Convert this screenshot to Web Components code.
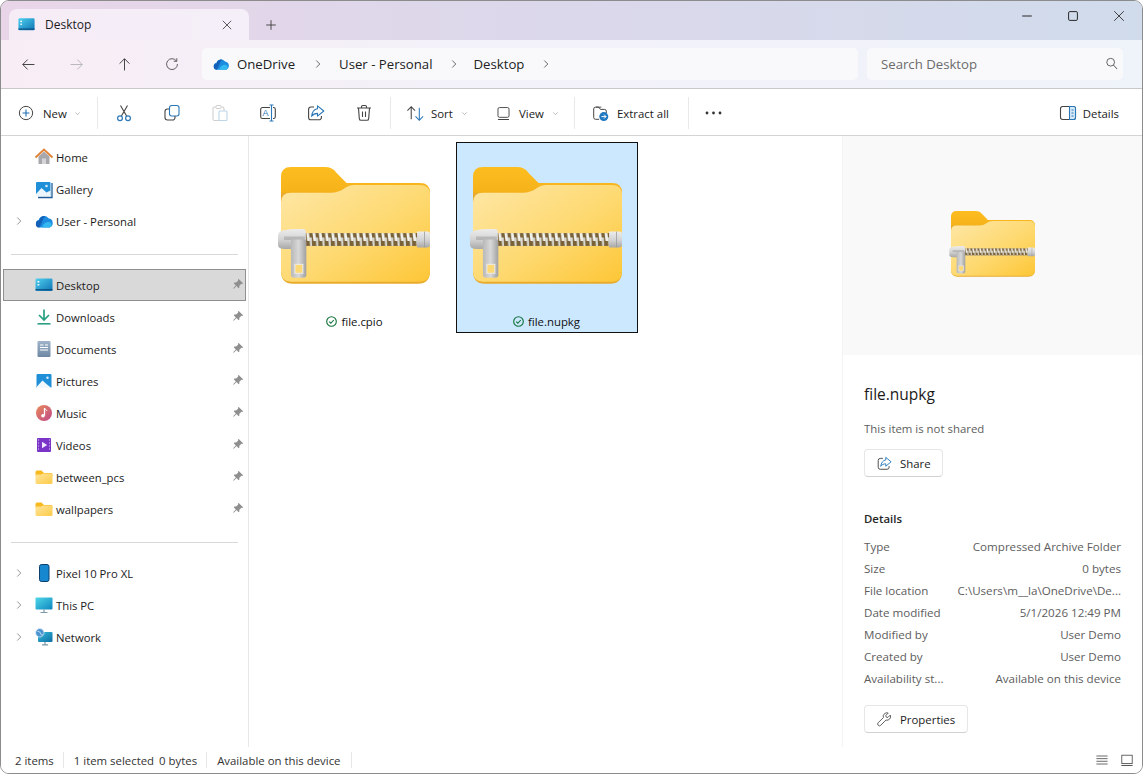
<!DOCTYPE html>
<html lang="en"><head><meta charset="utf-8"><title>Desktop - File Explorer</title>
<style>
html,body{margin:0;padding:0;background:#fff;overflow:hidden}
body{font-family:"Open Sans","Noto Sans","Liberation Sans",sans-serif;font-size:11.4px;color:#1b1b1b}
</style></head><body>
<x-window>
  <x-titlebar slot="title" label="Desktop"></x-titlebar>
  <x-addressbar slot="address"></x-addressbar>
  <x-toolbar slot="tools"></x-toolbar>
  <x-sidebar slot="side"></x-sidebar>
  <x-content slot="content">
    <x-tile name="file.cpio"></x-tile>
    <x-tile name="file.nupkg" selected></x-tile>
  </x-content>
  <x-details slot="details"></x-details>
  <x-statusbar slot="status"></x-statusbar>
</x-window>
<script>
const I={
back:'<path d="M17 10H3.5M9 4.2 3.2 10 9 15.8" fill="none" stroke="#3a3a3a" stroke-width="1.1"/>',
fwd:'<path d="M3 10h13.5M11 4.2l5.8 5.8-5.8 5.8" fill="none" stroke="#b4b4b8" stroke-width="1.1"/>',
up:'<path d="M10 17V3.5M4.2 9 10 3.2 15.8 9" fill="none" stroke="#3a3a3a" stroke-width="1.1"/>',
refresh:'<path d="M15.6 6.3A6.8 6.8 0 1 0 16.8 10M16 2.8v3.8h-3.8" fill="none" stroke="#4a4a4a" stroke-width="1.1"/>',
plus:'<circle cx="10" cy="10" r="7.4" fill="none" stroke="#444" stroke-width="1.1"/><path d="M10 6.2v7.6M6.2 10h7.6" stroke="#1f6fb2" stroke-width="1.2"/>',
cut:'<path d="M6.5 2.5 12.6 13M13.5 2.5 7.4 13" stroke="#444" stroke-width="1.1" fill="none"/><circle cx="6" cy="15.2" r="2.4" fill="none" stroke="#2a78b8" stroke-width="1.2"/><circle cx="14" cy="15.2" r="2.4" fill="none" stroke="#2a78b8" stroke-width="1.2"/>',
copy:'<rect x="7.5" y="2.5" width="9.5" height="10.5" rx="2.2" fill="#fff" stroke="#2a78b8" stroke-width="1.1"/><path d="M7 6H5.5A2.5 2.5 0 0 0 3 8.5v6A2.5 2.5 0 0 0 5.5 17h5a2.5 2.5 0 0 0 2.5-2.5V13" fill="none" stroke="#444" stroke-width="1.1"/>',
paste:'<rect x="3" y="4" width="11" height="13.5" rx="1.5" fill="none" stroke="#cfcfcf" stroke-width="1.1"/><rect x="6" y="2.5" width="5" height="3" rx="1" fill="#fff" stroke="#cfcfcf"/><rect x="9" y="8" width="8" height="9.5" rx="1" fill="#fff" stroke="#bcd6ea" stroke-width="1.1"/>',
rename:'<path d="M12 4.5H4.5A1.8 1.8 0 0 0 2.7 6.3v7.4a1.8 1.8 0 0 0 1.8 1.8H12M15 4.5h.5a1.8 1.8 0 0 1 1.8 1.8v7.4a1.8 1.8 0 0 1-1.8 1.8H15" fill="none" stroke="#444" stroke-width="1.1"/><path d="M11.5 2h4M11.5 18h4M13.5 2v16" stroke="#2a78b8" stroke-width="1.1" fill="none"/><text x="7.4" y="13.2" font-size="9" text-anchor="middle" fill="#2a78b8" font-family="Liberation Sans">A</text>',
share:'<path d="M8 4H5A2.4 2.4 0 0 0 2.6 6.4v8A2.4 2.4 0 0 0 5 16.8h8a2.4 2.4 0 0 0 2.4-2.4V13" fill="none" stroke="#444" stroke-width="1.1"/><path d="M11.5 2.8 17.8 8l-6.3 5.2V10.400C9 10.400 7 11.200 5.600 13.300 6 9.500 8 6.300 11.500 5.800Z" fill="#fff" stroke="#2a78b8" stroke-width="1.1" stroke-linejoin="round"/>',
del:'<path d="M3 5h14M7.500 5V3.800A1.300 1.300 0 0 1 8.800 2.500h2.400a1.300 1.300 0 0 1 1.300 1.300V5M4.500 5l.8 10.600a1.800 1.800 0 0 0 1.800 1.700h5.800a1.800 1.800 0 0 0 1.800-1.700L15.500 5" fill="none" stroke="#444" stroke-width="1.1"/><path d="M8.500 8.500v5.500M11.500 8.500v5.500" stroke="#444" stroke-width="1.1"/>',
sort:'<path d="M5.500 16V3M1.500 7l4-4.200 4 4.200" fill="none" stroke="#444" stroke-width="1.1"/><path d="M14 4v13M10 13l4 4.200 4-4.200" fill="none" stroke="#2a78b8" stroke-width="1.1"/>',
view:'<rect x="3.500" y="3" width="13" height="11.500" rx="1.800" fill="none" stroke="#444" stroke-width="1.1"/><path d="M3.500 17h13" stroke="#444" stroke-width="1.2"/>',
extract:'<path d="M3 5.500A2 2 0 0 1 5 3.500h3.500l2 2.500H15a2 2 0 0 1 2 2v2M3 5.500V15a2 2 0 0 0 2 2h4" fill="none" stroke="#444" stroke-width="1.1"/><path d="M5.500 3.500h6" stroke="#444" stroke-width="1"/><circle cx="14.200" cy="14" r="5" fill="#1f77c0"/><path d="M11.600 14h5M14.500 11.800l2.200 2.200-2.200 2.200" stroke="#fff" stroke-width="1.100" fill="none"/>',
details:'<rect x="2.500" y="3.500" width="15" height="13" rx="2.200" fill="none" stroke="#444" stroke-width="1.1"/><path d="M11.500 3.500h4a2 2 0 0 1 2 2v9a2 2 0 0 1-2 2h-4Z" fill="#d6e9f7" stroke="#2a78b8" stroke-width="1.1"/><path d="M13.500 7h2M13.500 10h2M13.500 13h2" stroke="#2a78b8"/>',
wrench:'<path d="M16.800 4.800 14 7.600l-2-.400-.4-2 2.800-2.800a4.300 4.300 0 0 0-5.700 5.300L2.600 13.800a2.100 2.100 0 0 0 3 3l6.100-6.100a4.300 4.300 0 0 0 5.100-5.900Z" fill="none" stroke="#444" stroke-width="1" stroke-linejoin="round"/>',
search:'<circle cx="8.500" cy="8" r="4.300" fill="none" stroke="#555" stroke-width="1"/><path d="m11.700 11.200 4 4.400" stroke="#555" stroke-width="1.1"/>',
chev:'<path d="m7.500 5 5 5-5 5" fill="none" stroke="#3c3c3c" stroke-width="1.1"/>',
chevg:'<path d="m7.500 5 5 5-5 5" fill="none" stroke="#8a8a8a" stroke-width="1.3"/>',
down:'<path d="m6 8 4 4 4-4" fill="none" stroke="#9a9a9a" stroke-width="1.2"/>',
pin:'<path d="M11 2.800 17.200 9l-1 .9-1.300-.3-3 3 .1 2.400-1.100 1-3-3L4 16.900l-.9-.9L6.900 12l-3-3 1-1.100 2.400.1 3-3-.3-1.300Z" fill="#8f8f8f"/>',
home:'<path d="M4.500 9.500 10 4.500l5.500 5V17h-11Z" fill="#a8a8ac"/><rect x="8" y="11.500" width="4" height="5.500" fill="#d5d5d8"/><path d="M1.500 10.500 10 2.500l8.500 8" fill="none" stroke="#e0853a" stroke-width="2"/>',
gallery:'<rect x="2" y="3" width="14.500" height="14" rx="1" fill="#1f8fd8"/><path d="M2 15l5.500-6 5 4.500 4-2V17H2Z" fill="#eaf5fc"/><circle cx="12.500" cy="7" r="1.300" fill="#cfe8f8"/><path d="M18 4v14.500H4" fill="none" stroke="#1c5d96" stroke-width="1.300"/>',
cloud:'<path d="M6 16.500a4 4 0 0 1-1.200-7.800A5.500 5.500 0 0 1 14.500 7.200 4.800 4.800 0 0 1 15.500 16.500Z" fill="#1d8be0"/><path d="M5.500 16.500a3.500 3.500 0 0 1-.3-7 5 5 0 0 1 6.300-4.200C9 7 9 9 8 11Z" fill="#1260b8"/><path d="M8 16.500c1-3 3-6 7.500-5.500A3 3 0 0 1 16 16.500Z" fill="#35b8f0"/>',
desktop:'<rect x="1.500" y="3.500" width="17" height="12.500" rx="1.300" fill="url(#dk)"/><defs><linearGradient id="dk" x1="0" y1="0" x2="1" y2="1"><stop offset="0" stop-color="#4fd0ef"/><stop offset="1" stop-color="#0f74b4"/></linearGradient></defs><rect x="3.500" y="6" width="1.800" height="1.500" fill="#fff"/><rect x="3.500" y="9" width="1.800" height="1.500" fill="#e6f6fc"/><path d="M1.500 14.800h17" stroke="#0b4f84" stroke-width="1.300"/>',
downloads:'<path d="M10 2.500v10M5 8l5 5 5-5" fill="none" stroke="#2aa082" stroke-width="1.700"/><path d="M3.500 16.800h13" stroke="#2aa082" stroke-width="1.600"/>',
docs:'<rect x="3.500" y="2" width="13" height="16" rx="1" fill="url(#dc)"/><defs><linearGradient id="dc" x1="0" y1="0" x2="0" y2="1"><stop offset="0" stop-color="#9fb4ca"/><stop offset="1" stop-color="#6e87a4"/></linearGradient></defs><path d="M6 6h3.500M11 6h3M6 8.500h8M6 11h8" stroke="#fff" stroke-width="1.100"/>',
pics:'<rect x="2.500" y="3" width="15" height="14" rx="1" fill="#1f8fd8"/><path d="M2.500 16l6-6.500 4.500 4 4.500 3.500H3Z" fill="#f0f8fd"/><circle cx="13.500" cy="6.800" r="1.200" fill="#d8eefa"/>',
music:'<circle cx="10" cy="10" r="8" fill="url(#mu)"/><defs><linearGradient id="mu" x1="0" y1="0" x2="1" y2="1"><stop offset="0" stop-color="#e88a58"/><stop offset="1" stop-color="#c0488a"/></linearGradient></defs><path d="M10.500 5v7.500" stroke="#fff" stroke-width="1.300"/><circle cx="9" cy="12.800" r="1.800" fill="#fff"/><path d="M10.500 5c.5 1.500 2 1.800 2.500 3" stroke="#fff" fill="none"/>',
videos:'<rect x="3" y="3" width="14" height="14" rx="1" fill="#7a34c8"/><path d="M8 6.800v6.400l5.200-3.200Z" fill="#f0e8ff"/><path d="M4 5h1M4 8h1M4 11h1M4 14h1M15 5h1M15 8h1M15 11h1M15 14h1" stroke="#e0ccf8" stroke-width="1.200"/>',
folder:'<path d="M1.500 5A1.500 1.500 0 0 1 3 3.500h4.500L10 6h7a1.500 1.500 0 0 1 1.500 1.500V9h-17Z" fill="#f7b91e"/><path d="M1.500 7.500H7L9 6.500h8A1.500 1.500 0 0 1 18.500 8v7.500A1.500 1.500 0 0 1 17 17H3a1.500 1.500 0 0 1-1.500-1.500Z" fill="url(#fo)"/><defs><linearGradient id="fo" x1="0" y1="0" x2="1" y2="1"><stop offset="0" stop-color="#fee49a"/><stop offset="1" stop-color="#fdcb4a"/></linearGradient></defs>',
phone:'<rect x="5.500" y="1.500" width="9.500" height="17" rx="2" fill="#1787d0" stroke="#0c3f6e" stroke-width="1"/>',
pc:'<rect x="1.500" y="2.500" width="17" height="12" rx="1" fill="url(#pc)"/><defs><linearGradient id="pc" x1="0" y1="0" x2="1" y2="1"><stop offset="0" stop-color="#4fd8e8"/><stop offset="1" stop-color="#0f86c0"/></linearGradient></defs><path d="M10 14.500v2.800M6.500 17.500h7" stroke="#7d98a8" stroke-width="1.200"/>',
net:'<rect x="4" y="5" width="14.500" height="10" rx="1" fill="url(#nt)"/><defs><linearGradient id="nt" x1="0" y1="0" x2="1" y2="1"><stop offset="0" stop-color="#36bcd8"/><stop offset="1" stop-color="#0e6ea6"/></linearGradient></defs><path d="M11 15v2.500M8 17.800h6" stroke="#7d98a8" stroke-width="1.200"/><circle cx="5.800" cy="5.800" r="4.200" fill="#4c94d0" stroke="#e8f2fa" stroke-width=".7"/><path d="M3.500 4.500c1.500-.5 2.500.5 3 2s1 1.500 2 1" stroke="#d6ecf8" fill="none"/>',
check:'<circle cx="10" cy="10" r="7.400" fill="none" stroke="#0f7038" stroke-width="1.700"/><path d="m6.500 10.200 2.500 2.500 4.500-5" fill="none" stroke="#0f7038" stroke-width="1.700"/>',
list:'<path d="M3 5h14M3 8.300h14M3 11.600h14M3 15h14" stroke="#444" stroke-width="1"/>',
tile:'<rect x="3.500" y="4" width="13" height="10.500" fill="none" stroke="#444" stroke-width="1"/><path d="M3 16.800h14" stroke="#444" stroke-width="1.200"/>',
x:'<path d="m4 4 12 12M16 4 4 16" stroke="#2e2e2e" stroke-width="1.100" fill="none"/>',
newtab:'<path d="M10 4v12M4 10h12" stroke="#3a3a3a" stroke-width="1.100"/>',
min:'<path d="M4 10h12" stroke="#1f1f1f" stroke-width="1.200"/>',
max:'<rect x="4.500" y="4.500" width="11" height="11" rx="1.500" fill="none" stroke="#1f1f1f" stroke-width="1.200"/>'
};
function def(tag,html,cls){
  const t=document.createElement('template');t.innerHTML=html;
  customElements.define(tag,class extends HTMLElement{
    constructor(){super();this.attachShadow({mode:'open'}).appendChild(t.content.cloneNode(true));}
    connectedCallback(){cls&&cls.call(this,this.shadowRoot);}
  });
}
def('x-icon',`<style>:host{display:inline-flex;flex:none;width:var(--s,20px);height:var(--s,20px)}svg{width:100%;height:100%;display:block}</style><svg viewBox="0 0 20 20"></svg>`,
 function(r){r.querySelector('svg').innerHTML=I[this.getAttribute('n')]||'';const s=this.getAttribute('s');if(s)this.style.setProperty('--s',s+'px');});

def('x-window',`<style>
:host{display:grid;box-sizing:border-box;width:1143px;height:774px;border:1px solid #8c8c8c;border-radius:9px;overflow:hidden;background:#fff;
grid-template-columns:248px 594px 1fr;grid-template-rows:39px 49px 47px 1fr 26px}
::slotted([slot=title]),::slotted([slot=address]),::slotted([slot=tools]),::slotted([slot=status]){grid-column:1/4}
</style><slot name="title"></slot><slot name="address"></slot><slot name="tools"></slot><slot name="side"></slot><slot name="content"></slot><slot name="details"></slot><slot name="status"></slot>`);

def('x-titlebar',`<style>
:host{display:flex;align-items:flex-end;padding-left:8px;background:linear-gradient(90deg,#e9d5e8 0,#ded7ea 35%,#d0dbeb 100%);font-size:12px}
.tab{width:240px;height:31px;box-sizing:border-box;display:flex;align-items:center;background:linear-gradient(90deg,#f6ecf6,#f4eff8);border-radius:8px 8px 0 0;padding:0 15px 0 8px}
.tab span{margin-left:9px;flex:1;color:#1c1c1c}
.plus{margin-left:14px;align-self:center;margin-top:9px}
.sp{flex:1}.c{display:flex;align-self:flex-start;margin-top:5px}
.c div{width:46px;height:20px;display:flex;justify-content:center;align-items:center}
</style><div class="tab"><x-icon n="desktop" s="19"></x-icon><span>Desktop</span><x-icon n="x" s="14"></x-icon></div>
<x-icon class="plus" n="newtab" s="16"></x-icon><div class="sp"></div>
<div class="c"><div><x-icon n="min" s="16"></x-icon></div><div><x-icon n="max" s="16"></x-icon></div><div><x-icon n="x" s="16"></x-icon></div></div>`);

def('x-addressbar',`<style>
:host{display:flex;align-items:center;box-sizing:border-box;padding:0 0 0 3px;background:linear-gradient(90deg,#f8edf5,#f3f1f9 40%,#eff3fa);border-bottom:1px solid #c9c9cb}
.n{width:48px;display:flex;justify-content:center}
.crumb{margin-left:6px;width:656px;height:32px;border-radius:5px;background:#f9f9fc;display:flex;align-items:center;padding-left:10px;box-sizing:border-box;font-size:13.2px;color:#222}
.crumb x-icon{margin-right:7px}
.search{margin-left:9px;width:256px;height:32px;border-radius:5px;background:#f9f9fc;display:flex;align-items:center;justify-content:space-between;padding:0 2px 0 14px;box-sizing:border-box;font-size:13.2px;color:#6b6b6b}
</style><div class="n"><x-icon n="back" s="17"></x-icon></div><div class="n"><x-icon n="fwd" s="17"></x-icon></div><div class="n"><x-icon n="up" s="17"></x-icon></div><div class="n"><x-icon n="refresh" s="16"></x-icon></div>
<div class="crumb"><x-icon n="cloud" s="18"></x-icon><span>OneDrive</span><x-icon style="margin:0 14px 0 16px" n="chev" s="14"></x-icon><span>User - Personal</span><x-icon style="margin:0 13px 0 14px" n="chev" s="14"></x-icon><span>Desktop</span><x-icon style="margin:0 0 0 15px" n="chev" s="14"></x-icon></div>
<div class="search"><span>Search Desktop</span><x-icon n="search" s="18"></x-icon></div>`);

def('x-toolbar',`<style>
:host{display:flex;align-items:center;box-sizing:border-box;border-bottom:1px solid #d4d4d4;background:#fff;height:47px;font-size:11.4px;padding:2px 0 0 16px}
.sep{width:1px;height:32px;background:#e9e9e9;flex:none}
.ic{width:48px;display:flex;justify-content:center;flex:none}
.t{display:flex;align-items:center;flex:none}
.sp{flex:1}
.lbl{margin-left:8px}
</style>
<div class="t" style="width:80px"><x-icon n="plus" s="18"></x-icon><span class="lbl">New</span><x-icon n="down" s="11" style="margin-left:5px"></x-icon></div>
<div class="sep"></div>
<div class="t" style="margin-left:2px"><div class="ic"><x-icon n="cut"></x-icon></div><div class="ic"><x-icon n="copy"></x-icon></div><div class="ic"><x-icon n="paste"></x-icon></div><div class="ic"><x-icon n="rename"></x-icon></div><div class="ic"><x-icon n="share"></x-icon></div><div class="ic"><x-icon n="del"></x-icon></div></div>
<div class="sep" style="margin-left:2px"></div>
<div class="t" style="margin-left:15px;width:89px"><x-icon n="sort" s="19"></x-icon><span class="lbl" style="margin-left:6px">Sort</span><x-icon n="down" s="11" style="margin-left:6px"></x-icon></div>
<div class="t" style="width:79px"><x-icon n="view" s="17"></x-icon><span class="lbl" style="margin-left:7px">View</span><x-icon n="down" s="11" style="margin-left:6px"></x-icon></div>
<div class="sep"></div>
<div class="t" style="margin-left:16px;width:97px"><x-icon n="extract" s="18"></x-icon><span class="lbl">Extract all</span></div>
<div class="sep"></div>
<div class="t" style="margin-left:16px"><svg width="17" height="4" viewBox="0 0 17 4"><circle cx="2" cy="2" r="1.400" fill="#333"/><circle cx="8.500" cy="2" r="1.400" fill="#333"/><circle cx="15" cy="2" r="1.400" fill="#333"/></svg></div>
<div class="sp"></div>
<div class="t" style="margin-right:23px"><x-icon n="details" s="20"></x-icon><span class="lbl" style="margin-left:5px">Details</span></div>`);

def('x-nav',`<style>
:host{display:flex;align-items:center;height:32px;box-sizing:border-box;margin-left:2px;width:243px;font-size:11.3px}
:host([active]){background:#d9d9d9;border:1px solid #8f8f8f}
.e{width:31px;display:flex;justify-content:center;flex:none}
.i{width:20px;margin-right:2px;display:flex;flex:none}
.t{flex:1;color:#1b1b1b}
.p{margin-right:1px}
</style><div class="e"></div><div class="i"></div><div class="t"><slot></slot></div><div class="p"></div>`,function(r){
 if(this.hasAttribute('exp'))r.querySelector('.e').innerHTML='<x-icon n="chevg" s="14"></x-icon>';
 r.querySelector('.i').innerHTML=`<x-icon n="${this.getAttribute('i')}" s="20"></x-icon>`;
 if(this.hasAttribute('pin'))r.querySelector('.p').innerHTML='<x-icon n="pin" s="14"></x-icon>';
 if(this.hasAttribute('active')){r.querySelector('.e').style.marginLeft='-1px';r.querySelector('.p').style.marginRight='0';}
});

def('x-sidebar',`<style>
:host{display:flex;flex-direction:column;border-right:1px solid #e8e8e8;padding-top:5px;box-sizing:border-box;min-height:0}
hr{border:0;height:1px;background:#d8d8d8;margin:17px 10px 14px 10px;width:227px;flex:none}
</style>
<x-nav i="home">Home</x-nav><x-nav i="gallery">Gallery</x-nav><x-nav i="cloud" exp>User - Personal</x-nav><hr>
<x-nav i="desktop" pin active>Desktop</x-nav><x-nav i="downloads" pin>Downloads</x-nav><x-nav i="docs" pin>Documents</x-nav><x-nav i="pics" pin>Pictures</x-nav><x-nav i="music" pin>Music</x-nav><x-nav i="videos" pin>Videos</x-nav><x-nav i="folder" pin>between_pcs</x-nav><x-nav i="folder" pin>wallpapers</x-nav><hr>
<x-nav i="phone" exp>Pixel 10 Pro XL</x-nav><x-nav i="pc" exp>This PC</x-nav><x-nav i="net" exp>Network</x-nav>`);

def('x-content',`<style>
:host{display:flex;align-items:flex-start;gap:10px;padding:6px 0 0 15px;box-sizing:border-box;border-right:1px solid #f3f3f3}
</style><slot></slot>`);

def('x-zip',`<style>:host{display:block;width:var(--w,149px)}svg{display:block;width:100%;height:auto;overflow:visible}</style>
<svg viewBox="0 0 150 118">
<defs>
<linearGradient id="b" x1="0" y1="0" x2="0" y2="1"><stop offset="0" stop-color="#fdbd1f"/><stop offset="1" stop-color="#eba513"/></linearGradient>
<linearGradient id="f" x1="0" y1="0" x2="1" y2="1"><stop offset="0" stop-color="#fee7a6"/><stop offset=".55" stop-color="#fed970"/><stop offset="1" stop-color="#fdc636"/></linearGradient>
<linearGradient id="m" x1="0" y1="0" x2="0" y2="1"><stop offset="0" stop-color="#ececec"/><stop offset=".55" stop-color="#d2d2d2"/><stop offset="1" stop-color="#a8a8a8"/></linearGradient>
<linearGradient id="p" x1="0" y1="0" x2="1" y2="0"><stop offset="0" stop-color="#b8b8b8"/><stop offset=".5" stop-color="#d8d8d8"/><stop offset="1" stop-color="#a0a0a0"/></linearGradient>
<pattern id="z" x="25" y="66.500" width="6.300" height="13" patternUnits="userSpaceOnUse">
<rect width="6.300" height="13" fill="#7a6238"/>
<path d="M.4 0h2.800l1 8H1.400Z" fill="#f2f2ec"/>
<path d="M3.600 4.500h2.400l.3 8.500H4.300Z" fill="#dcdcd4"/>
</pattern>
</defs>
<path d="M0 10Q0 0 10 0H44Q52 0 56 6L66 16H140Q150 16 150 26V60H0Z" fill="url(#b)"/>
<path d="M0 115V26Q0 26 6 26H50Q58 26 64 21.500Q68 18 74 18H140Q150 18 150 28V105Q150 117.500 138 117.500H12Q0 117.500 0 105Z" fill="#e9ab2c"/>
<path d="M0 36Q0 26 10 26H50Q58 26 64 21.500Q68 18 74 18H140Q150 18 150 28V105Q150 115.500 140 115.500H10Q0 115.500 0 105Z" fill="url(#f)"/>
<rect x="24" y="66.500" width="116" height="13" fill="url(#z)"/>
<path d="M137 65h10q3 0 3 3v10q0 3-3 3h-10Z" fill="url(#m)"/><path d="M144.500 65v16" stroke="#9a9a9a" stroke-width=".8"/>
<path d="M-3 69q0-4 5-5 7-1.500 14-1.500h6q3 0 3 3v14q0 3-3 3H4q-7 0-7-4Z" fill="url(#m)"/>
<rect x="3" y="70" width="21" height="3.500" fill="#9a9a9a" opacity=".5"/>
<path d="M10 73h13q2.500 0 2.500 2.500v33q0 3-3 3H13q-3 0-3-3Z" fill="url(#p)"/>
<rect x="14" y="98" width="8" height="9" fill="#fdd877" stroke="#ececec"/>
</svg>`);

def('x-tile',`<style>
:host{display:flex;flex-direction:column;align-items:center;box-sizing:border-box;width:182px;height:191px;border:1px solid transparent;padding-top:24px}
:host([selected]){background:#cce8ff;border-color:#111}
.n{display:flex;align-items:center;gap:3px;margin:30px 0 0 -2px;font-size:11.4px;color:#111}
</style><x-zip></x-zip><div class="n"><x-icon n="check" s="13"></x-icon><span></span></div>`,function(r){r.querySelector('span').textContent=this.getAttribute('name');});

def('x-btn',`<style>
:host{display:inline-flex;align-items:center;box-sizing:border-box;height:28px;border:1px solid #e6e6e6;border-bottom-color:#d2d2d2;border-radius:4px;background:#fff;padding:0 0 0 11px;gap:7px;font-size:11.4px;color:#1b1b1b;width:var(--w)}
</style><slot></slot>`);

def('x-row',`<style>
:host{display:flex;justify-content:space-between;height:22px;align-items:center;color:#5d5d5d;font-size:11.6px}
.v{text-align:right}
</style><div><slot name="k"></slot></div><div class="v"><slot></slot></div>`);

def('x-details',`<style>
:host{display:flex;flex-direction:column;box-sizing:border-box;background:#fff;min-height:0}
.prev{height:219px;background:#f9f9f9;display:flex;align-items:center;justify-content:center;flex:none;padding-bottom:3px;box-sizing:border-box}
.prev x-zip{--w:84px;margin-left:1px}
.b{padding:0 21px;display:flex;flex-direction:column}
h2{margin:29px 0 0;font-size:15.5px;color:#1b1b1b;line-height:20px;font-weight:500}
.ns{color:#5d5d5d;margin-top:17px;line-height:16px;font-size:11.4px}
.sh{margin-top:12px;align-self:flex-start;--w:79px}
h3{margin:34px 0 8px;font-size:11.4px;font-weight:600;line-height:16px;color:#262626}
.pr{margin-top:16px;align-self:flex-start;--w:104px}
</style><div class="prev"><x-zip></x-zip></div>
<div class="b"><h2>file.nupkg</h2><div class="ns">This item is not shared</div>
<x-btn class="sh"><x-icon n="share" s="17"></x-icon>Share</x-btn>
<h3>Details</h3>
<x-row><span slot="k">Type</span>Compressed Archive Folder</x-row>
<x-row><span slot="k">Size</span>0 bytes</x-row>
<x-row><span slot="k">File location</span>C:\\Users\\m__la\\OneDrive\\De...</x-row>
<x-row><span slot="k">Date modified</span>5/1/2026 12:49 PM</x-row>
<x-row><span slot="k">Modified by</span>User Demo</x-row>
<x-row><span slot="k">Created by</span>User Demo</x-row>
<x-row><span slot="k">Availability st...</span>Available on this device</x-row>
<x-btn class="pr"><x-icon n="wrench" s="17"></x-icon>Properties</x-btn></div>`);

def('x-statusbar',`<style>
:host{display:flex;align-items:center;font-size:11.4px;color:#333;padding-left:14px;background:#fff}
.s{width:1px;height:16px;background:#e6e6e6;margin:0 10px 0 9px;flex:none}
.sp{flex:1}.r{display:flex;margin-right:7px}
</style><span>2 items</span><div class="s"></div><span>1 item selected</span><span style="margin-left:5px">0 bytes</span><div class="s"></div><span>Available on this device</span><div class="s" style="margin-left:10px"></div><div class="sp"></div>
<div class="r"><x-icon n="list" s="16"></x-icon><x-icon n="tile" s="16" style="margin-left:9px"></x-icon></div>`);
</script>
</body></html>
